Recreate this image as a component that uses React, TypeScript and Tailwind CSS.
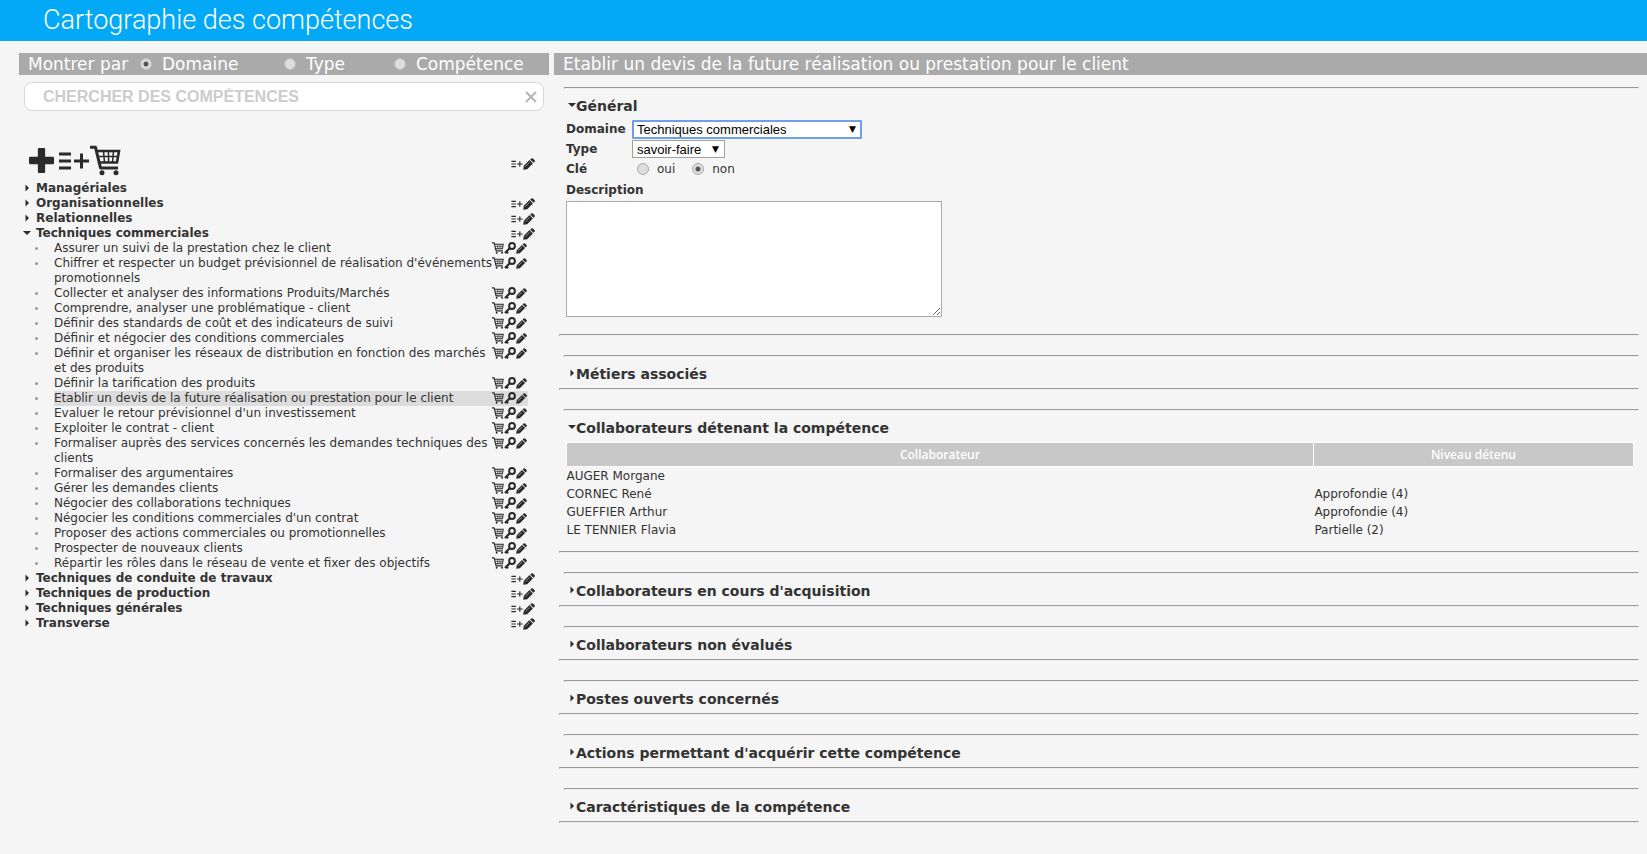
import React, { useState } from "react";

type IconProps = { className?: string };

const CartIcon = ({ className }: IconProps) => (
  <svg viewBox="0 0 31 30" className={className} fill="none" stroke="#2b2b2b" aria-hidden="true">
    <path d="M0 1.800h5.500L10.500 22.500H28" strokeWidth="3" strokeLinejoin="round" />
    <path d="M6.500 5.500h22.500L27 17H9.500" strokeWidth="2.600" />
    <path d="M8 11h20M13.500 5.500l1 11.500M18.500 5.500V17M23.500 5.500l-1 11.500" strokeWidth="1.500" />
    <circle cx="12" cy="27.300" r="2.500" fill="#2b2b2b" stroke="none" />
    <circle cx="26" cy="27.300" r="2.500" fill="#2b2b2b" stroke="none" />
  </svg>
);

const ListAddIcon = ({ className }: IconProps) => (
  <svg viewBox="0 0 32 20" className={className} fill="none" stroke="#2b2b2b" strokeWidth="3" aria-hidden="true">
    <path d="M1 3h12M1 10h12M1 17h12M16 10h15M23.500 2.500v15" />
  </svg>
);

const PlusIcon = ({ className }: IconProps) => (
  <svg viewBox="0 0 24 24" className={className} fill="#2b2b2b" aria-hidden="true">
    <path d="M9.500 0h5a1 1 0 0 1 1 1V8.500h7.500a1 1 0 0 1 1 1v5a1 1 0 0 1-1 1h-7.500V23a1 1 0 0 1-1 1h-5a1 1 0 0 1-1-1v-7.500H1a1 1 0 0 1-1-1v-5a1 1 0 0 1 1-1h7.500V1A1 1 0 0 1 9.500 0z" />
  </svg>
);

const KeyIcon = ({ className }: IconProps) => (
  <svg viewBox="0 0 12 12" className={className} fill="none" stroke="#2b2b2b" aria-hidden="true">
    <circle cx="8" cy="4" r="2.900" strokeWidth="2" />
    <path d="M6 6L1 11M2 9.200l2 2" strokeWidth="2.200" />
  </svg>
);

const PencilIcon = ({ className }: IconProps) => (
  <svg viewBox="0 0 12 12" className={className} fill="#2b2b2b" aria-hidden="true">
    <path d="M.8 7.800l5.700-5.700 3.400 3.400-5.700 5.700L.2 11.800zM7.200 1.500L8.300.5q.8-.7 1.600 0l1.600 1.600q.7.800 0 1.600l-1 1.100z" />
    <path d="M2.300 8.600l4.200-4.200" stroke="#f5f5f5" strokeWidth=".5" />
  </svg>
);

const Caret = ({ open }: { open: boolean }) => (
  <svg viewBox="0 0 8 8" className="mb-[2px] size-2 shrink-0" fill="#2b2b2b" aria-hidden="true">
    <path d={open ? "M0 2h8L4 6z" : "M2.500 0.500v7L6 4z"} />
  </svg>
);

const Rule = ({ className = "" }: { className?: string }) => (
  <hr className={`h-[2px] border border-[#eeeeee] border-t-[#9a9a9a] border-l-[#9a9a9a] ${className}`} />
);

const skills = [
  "Assurer un suivi de la prestation chez le client",
  "Chiffrer et respecter un budget prévisionnel de réalisation d'événements promotionnels",
  "Collecter et analyser des informations Produits/Marchés",
  "Comprendre, analyser une problématique - client",
  "Définir des standards de coût et des indicateurs de suivi",
  "Définir et négocier des conditions commerciales",
  "Définir et organiser les réseaux de distribution en fonction des marchés et des produits",
  "Définir la tarification des produits",
  "Etablir un devis de la future réalisation ou prestation pour le client",
  "Evaluer le retour prévisionnel d'un investissement",
  "Exploiter le contrat - client",
  "Formaliser auprès des services concernés les demandes techniques des clients",
  "Formaliser des argumentaires",
  "Gérer les demandes clients",
  "Négocier des collaborations techniques",
  "Négocier les conditions commerciales d'un contrat",
  "Proposer des actions commerciales ou promotionnelles",
  "Prospecter de nouveaux clients",
  "Répartir les rôles dans le réseau de vente et fixer des objectifs",
];

const domains = [
  { name: "Managériales", tools: false, skills: [] as string[] },
  { name: "Organisationnelles", tools: true, skills: [] },
  { name: "Relationnelles", tools: true, skills: [] },
  { name: "Techniques commerciales", tools: true, skills },
  { name: "Techniques de conduite de travaux", tools: true, skills: [] },
  { name: "Techniques de production", tools: true, skills: [] },
  { name: "Techniques générales", tools: true, skills: [] },
  { name: "Transverse", tools: true, skills: [] },
];

const holders = [
  ["AUGER Morgane", ""],
  ["CORNEC René", "Approfondie (4)"],
  ["GUEFFIER Arthur", "Approfondie (4)"],
  ["LE TENNIER Flavia", "Partielle (2)"],
];

const radioBase =
  "size-3 shrink-0 appearance-none rounded-full border bg-[#dddddd] checked:bg-[radial-gradient(circle,#555555_0_2px,#dddddd_3px)]";

const DomainTools = () => (
  <span className="flex items-center">
    <button type="button" aria-label="Ajouter à la liste">
      <ListAddIcon className="h-2 w-3" />
    </button>
    <button type="button" aria-label="Modifier">
      <PencilIcon className="size-3" />
    </button>
  </span>
);

const SkillTools = () => (
  <span className="-ml-1 flex h-[14px] shrink-0 items-center">
    <button type="button" aria-label="Ajouter au panier">
      <CartIcon className="size-3" />
    </button>
    <button type="button" aria-label="Clé">
      <KeyIcon className="size-3" />
    </button>
    <button type="button" aria-label="Modifier">
      <PencilIcon className="size-[11px]" />
    </button>
  </span>
);

function Section({
  title,
  initiallyOpen = false,
  children,
}: {
  title: string;
  initiallyOpen?: boolean;
  children?: React.ReactNode;
}) {
  const [open, setOpen] = useState(initiallyOpen);
  return (
    <section className="mb-[19px]">
      <Rule className="ml-[5px]" />
      <h2 className="pt-[7px] pb-1 pl-[9px] text-sm font-bold">
        <button type="button" aria-expanded={open} onClick={() => setOpen(!open)} className="flex h-5 items-center">
          <Caret open={open} />
          {title}
        </button>
      </h2>
      {open && children}
      <Rule />
    </section>
  );
}

export default function App() {
  return (
    <div className="min-h-screen bg-[#f5f5f5] font-['DejaVu_Sans',Verdana,sans-serif] text-xs text-[#333333]">
      <header className="flex h-[41px] items-center bg-[#03a9f7] pl-[43px]">
        <h1 className="font-['Roboto',sans-serif] text-[27px] font-light text-white">Cartographie des compétences</h1>
      </header>

      <div className="flex gap-[5px] pt-3">
        <aside className="w-1/3 shrink-0 pl-[19px]">
          <fieldset className="flex h-[22px] items-center bg-[#aaaaaa] pl-[9px] text-[17px] text-white">
            <span className="w-28">Montrer par</span>
            <label className="flex w-36 items-center gap-[10px]">
              <input type="radio" name="view" defaultChecked className={`${radioBase} border-[#bbbbbb]`} />
              Domaine
            </label>
            <label className="flex w-[110px] items-center gap-[10px]">
              <input type="radio" name="view" className={`${radioBase} border-[#bbbbbb]`} />
              Type
            </label>
            <label className="flex items-center gap-[10px]">
              <input type="radio" name="view" className={`${radioBase} border-[#bbbbbb]`} />
              Compétence
            </label>
          </fieldset>

          <div className="mt-[7px] mr-[5px] ml-[5px] flex h-[29px] items-center rounded-lg border border-[#d8d8d8] bg-white pr-[6px] pl-[18px]">
            <input
              type="text"
              aria-label="Chercher des compétences"
              placeholder="CHERCHER DES COMPÉTENCES"
              className="min-w-0 flex-1 bg-transparent font-['Liberation_Sans',Arial,sans-serif] text-base font-bold outline-none placeholder:text-[#cccccc]"
            />
            <button type="button" aria-label="Effacer">
              <svg viewBox="0 0 12 12" className="size-3" stroke="#b5b5b5" strokeWidth="2" aria-hidden="true">
                <path d="M1 1l10 10M11 1L1 11" />
              </svg>
            </button>
          </div>

          <div className="mt-[34px] flex items-end justify-between pr-[14px] pb-[5px] pl-[10px]">
            <span className="flex items-center">
              <button type="button" aria-label="Ajouter">
                <PlusIcon className="mr-1 size-[25px]" />
              </button>
              <button type="button" aria-label="Ajouter à la liste">
                <ListAddIcon className="h-5 w-8" />
              </button>
              <button type="button" aria-label="Panier">
                <CartIcon className="size-[31px]" />
              </button>
            </span>
            <span className="pb-[6px]">
              <DomainTools />
            </span>
          </div>

          <ul className="leading-[15px]">
            {domains.map((d) => (
              <li key={d.name}>
                <div className="flex h-[15px] items-center justify-between pr-[14px] pl-1">
                  <button type="button" className="flex items-center gap-[5px] font-bold">
                    <Caret open={d.skills.length > 0} />
                    {d.name}
                  </button>
                  {d.tools && <DomainTools />}
                </div>
                {d.skills.length > 0 && (
                  <ul>
                    {d.skills.map((s, i) => (
                      <li key={s} className="flex pr-[21px] pl-[14px]">
                        <span className="mt-[6px] mr-[16px] ml-[2px] size-[3px] shrink-0 rounded-full bg-[#999999]" />
                        <div className={`flex flex-1 justify-between pr-px ${i === 8 ? "bg-[#dcdcdc]" : ""}`}>
                          <a href="#competence" className="max-w-[441px]">
                            {s}
                          </a>
                          <SkillTools />
                        </div>
                      </li>
                    ))}
                  </ul>
                )}
              </li>
            ))}
          </ul>
        </aside>

        <main className="min-w-0 flex-1">
          <div className="flex h-[22px] items-center bg-[#aaaaaa] pl-[9px] text-[17px] text-white">
            Etablir un devis de la future réalisation ou prestation pour le client
          </div>
          <div className="mt-3 mr-2 ml-[5px]">
            <Section title="Général" initiallyOpen>
              <div className="mb-[17px] pl-[7px]">
                <div className="-mt-px grid grid-cols-[66px_auto] items-center justify-start">
                  <label htmlFor="domaine" className="font-bold">
                    Domaine
                  </label>
                  <div className="relative flex h-5 w-fit items-center">
                    <select
                      id="domaine"
                      className="h-[19px] w-[230px] appearance-none rounded-[1px] border-2 border-[#6f9fe8] bg-white pl-[3px] font-['Liberation_Sans',Arial,sans-serif] text-[13px] leading-[15px] text-black"
                    >
                      <option>Techniques commerciales</option>
                    </select>
                    <span className="pointer-events-none absolute right-[6px] text-[9px] text-black">▼</span>
                  </div>
                  <label htmlFor="type" className="font-bold">
                    Type
                  </label>
                  <div className="relative flex h-5 w-fit items-center">
                    <select
                      id="type"
                      className="h-[18px] w-[93px] appearance-none border border-[#a0a0a0] bg-white pl-1 font-['Liberation_Sans',Arial,sans-serif] text-[13px] leading-[15px] text-black"
                    >
                      <option>savoir-faire</option>
                    </select>
                    <span className="pointer-events-none absolute right-[6px] text-[9px] text-black">▼</span>
                  </div>
                  <span className="font-bold">Clé</span>
                  <div className="flex h-5 items-center gap-[17px] pl-[5px]">
                    <label className="flex items-center gap-2">
                      <input type="radio" name="cle" className={`${radioBase} border-[#aaaaaa]`} />
                      oui
                    </label>
                    <label className="flex items-center gap-2">
                      <input type="radio" name="cle" defaultChecked className={`${radioBase} border-[#aaaaaa]`} />
                      non
                    </label>
                  </div>
                </div>
                <label htmlFor="description" className="block pt-[3px] pb-[3px] font-bold">
                  Description
                </label>
                <textarea
                  id="description"
                  className="block h-[116px] w-[376px] resize border border-[#a9a9a9] bg-white"
                />
              </div>
            </Section>
            <Section title="Métiers associés" />
            <Section title="Collaborateurs détenant la compétence" initiallyOpen>
              <div className="mb-3 pr-[5px] pl-[7px]">
                <table className="w-full table-fixed border-collapse">
                  <thead className="font-['Open_Sans',sans-serif]">
                    <tr className="h-6">
                      <th className="w-[70%] border border-white bg-[#c8c8c8] font-semibold text-white">
                        Collaborateur
                      </th>
                      <th className="border border-white bg-[#c8c8c8] font-semibold text-white">Niveau détenu</th>
                    </tr>
                  </thead>
                  <tbody>
                    {holders.map(([name, level]) => (
                      <tr key={name} className="h-[18px]">
                        <td>{name}</td>
                        <td className="pl-px">{level}</td>
                      </tr>
                    ))}
                  </tbody>
                </table>
              </div>
            </Section>
            <Section title="Collaborateurs en cours d'acquisition" />
            <Section title="Collaborateurs non évalués" />
            <Section title="Postes ouverts concernés" />
            <Section title="Actions permettant d'acquérir cette compétence" />
            <Section title="Caractéristiques de la compétence" />
          </div>
        </main>
      </div>
    </div>
  );
}
